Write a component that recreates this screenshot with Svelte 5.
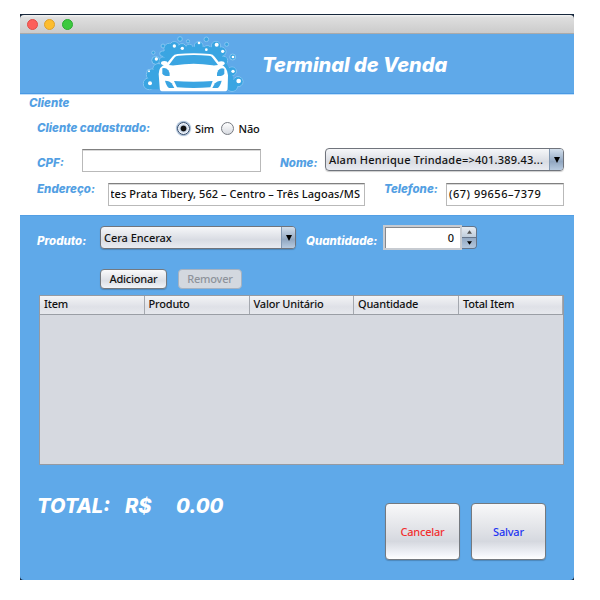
<script>
  const columns = ['Item', 'Produto', 'Valor Unitário', 'Quantidade', 'Total Item'];
  let registered = $state(true);

  const foam = [
    [58, 161, 18], [66, 134, 17], [84, 116, 15], [100, 94, 13], [108, 72, 12],
    [118, 56, 16], [133, 50, 15], [156, 55, 14], [178, 54, 11], [206, 48, 13],
    [232, 60, 13], [258, 48, 14], [274, 65, 14], [280, 92, 13], [306, 124, 13], [324, 155, 15], [306, 166, 18]
  ];
  const bubbles = [
    [99, 48, 6], [70, 68, 5], [150, 27, 7], [174, 34, 5], [229, 28, 7],
    [290, 43, 6], [77, 91, 12], [308, 81, 9], [57, 124, 6], [97, 71, 8]
  ];
  const shine = [
    [79, 87, 5], [133, 48, 5], [157, 55, 5], [207, 39, 4], [260, 44, 6],
    [278, 64, 5], [229, 59, 4], [60, 160, 6], [326, 153, 7], [309, 124, 5], [309, 81, 4], [57, 124, 3]
  ];
</script>

<main class="window">
  <header class="titlebar">
    <i class="light red"></i><i class="light yellow"></i><i class="light green"></i>
  </header>

  <section class="banner">
    <svg class="logo" viewBox="36 18 306 171" aria-hidden="true">
      <g fill="#3aa5e2" stroke="#86c6f2" stroke-width="3">
        {#each foam as [x, y, r]}<circle cx={x} cy={y} {r} />{/each}
        {#each bubbles as [x, y, r]}<circle cx={x} cy={y} {r} />{/each}
      </g>
      <g fill="#3aa5e2">
        {#each foam as [x, y, r]}<circle cx={x} cy={y} r={r - 1.5} />{/each}
        <path d="M60 178 L66 140 L96 96 L118 58 L180 50 L260 52 L284 90 L306 130 L318 178Z" />
      </g>
      <g fill="#fff">
        {#each shine as [x, y, r]}<circle cx={x} cy={y} {r} />{/each}
        <path d="M109 102 L127 80 Q132 73 143 72 Q191 68 240 72 Q249 73 254 80 L271 102 Q292 110 294 136 L293 172 Q293 184 286 184 L96 184 Q89 184 89 172 L86 132 Q86 109 109 102Z" />
        <ellipse cx="103" cy="99" rx="10" ry="6" />
        <ellipse cx="274" cy="100" rx="10" ry="6" />
      </g>
      <g fill="#3aa5e2">
        <path d="M117 105 L133 83 Q137 77 145 77 Q191 73 237 77 Q244 77 248 84 L264 105 Q254 107 247 106 Q191 97 135 106 Q126 107 117 105Z" />
        <path d="M97 115 Q108 112 115 121 Q121 130 119 138 Q102 140 97 131Z" />
        <path d="M283 116 Q272 112 265 121 Q259 130 261 138 Q278 140 283 131Z" />
        <path d="M132 153 Q191 158 248 153 L241 172 Q191 176 141 172Z" />
        <path d="M105 152 Q120 153 125 160 L133 174 L117 174 Q109 168 105 152Z" />
        <path d="M275 152 Q260 153 255 160 L247 174 L263 174 Q271 168 275 152Z" />
      </g>
    </svg>
    <h1>Terminal de Venda</h1>
  </section>

  <section class="client">
    <h2 class="label">Cliente</h2>
    <div class="row registered">
      <span class="label q">Cliente cadastrado:</span>
      <label class="opt"><input type="radio" name="reg" checked={registered} onchange={() => (registered = true)} /><span class="dot"></span><span>Sim</span></label>
      <label class="opt"><input type="radio" name="reg" checked={!registered} onchange={() => (registered = false)} /><span class="dot"></span><span>Não</span></label>
    </div>
    <div class="row ids">
      <span class="label cpf">CPF:</span>
      <div class="field cpf-field"></div>
      <span class="label nome">Nome:</span>
      <div class="combo names"><span class="value">Alam Henrique Trindade=&gt;401.389.43...</span><span class="arrow"><svg viewBox="0 0 6 6"><path d="M0 0H6L3 6Z" /></svg></span></div>
    </div>
    <div class="row contact">
      <span class="label addr">Endereço:</span>
      <div class="field addr-field"><div class="clip"><span>ntes Prata Tibery, 562 – Centro – Três Lagoas/MS</span></div></div>
      <span class="label tel">Telefone:</span>
      <div class="field tel-field"><span>(67) 99656–7379</span></div>
    </div>
  </section>

  <section class="sale">
    <div class="row product">
      <span class="label prod">Produto:</span>
      <div class="combo products"><span class="value">Cera Encerax</span><span class="arrow"><svg viewBox="0 0 6 6"><path d="M0 0H6L3 6Z" /></svg></span></div>
      <span class="label qty">Quantidade:</span>
      <div class="spinner">
        <span class="amount">0</span>
        <div class="steps">
          <span><svg viewBox="0 0 6 4"><path d="M0 4H6L3 0Z" /></svg></span>
          <span class="down"><svg viewBox="0 0 6 4"><path d="M0 0H6L3 4Z" /></svg></span>
        </div>
      </div>
    </div>
    <div class="row actions">
      <button class="add">Adicionar</button>
      <button class="remove" disabled>Remover</button>
    </div>
    <div class="table">
      <div class="thead">
        {#each columns as name}<span>{name}</span>{/each}
      </div>
    </div>
    <footer class="row">
      <div class="total"><span class="t1">TOTAL:</span><span class="t2">R$</span><span class="t3">0.00</span></div>
      <button class="big cancel">Cancelar</button>
      <button class="big save">Salvar</button>
    </footer>
  </section>
</main>

<style>
  :global(body) { background: #fff; }
  * { box-sizing: border-box; }
  .window {
    width: 554px; height: 566px; margin: 14px 0 0 20px; overflow: hidden;
    background: #17283d; font: 500 11px/14px "Noto Sans", sans-serif; color: #111;
    white-space: nowrap; letter-spacing: -0.15px;
    display: flex; flex-direction: column;
  }
  .row { display: flex; align-items: flex-start; }
  .titlebar {
    height: 19px; margin-top: 1px; flex: none; display: flex; align-items: center; gap: 6.5px; padding: 0 0 0 6.5px;
    background: linear-gradient(#f4f4f4, #dedede 15%, #cbcbcb); border-bottom: 1px solid #aaa;
    border-radius: 4px 4px 0 0;
  }
  .light { width: 11px; height: 11px; border-radius: 50%; border: 1px solid; }
  .red { background: #fc605b; border-color: #e04d48; }
  .yellow { background: #fdbd2f; border-color: #dea02c; }
  .green { background: #3dc93f; border-color: #2cab31; }

  .banner {
    height: 60px; flex: none; display: flex; background: #5fa9e9; border-bottom: 1px solid #4999e4;
  }
  .logo { width: 102px; height: 57px; margin: 2px 0 0 122px; }
  h1 {
    margin: 17px 0 0 18px; color: #fff; font: italic 800 20px/28px Inter, sans-serif; letter-spacing: 0;
  }
  .label {
    font: italic 800 11.5px/16px Inter, sans-serif; color: #539fe3; flex: none; letter-spacing: 0;
  }
  .client { height: 121px; flex: none; background: #fff; border-top: 1px solid #c3e0fa; }
  h2.label { margin: 0 0 0 9px; height: 23px; }
  .registered { height: 31px; padding-left: 17px; }
  .registered .label { margin-top: 2px; width: 140px; }
  .opt { display: flex; align-items: center; width: 43.5px; height: 19px; margin-top: 1px; }
  .opt input { appearance: none; width: 0; height: 0; margin: 0; }
  .dot {
    width: 13px; height: 13px; margin-right: 5px; border-radius: 50%; border: 1px solid #777b82;
    background: linear-gradient(#fff, #d7dae0);
  }
  input:checked + .dot {
    border-color: #2d4567; background: radial-gradient(circle, #111 0 2.5px, #c2d0e2 3.3px, #f1f5fa 5px);
    box-shadow: 0 0 1px 1px #98b2cf;
  }
  .ids { height: 35px; padding-left: 17px; }
  .ids .label { margin-top: 6px; }
  .cpf { width: 45px; }
  .field {
    height: 23px; background: #fff; border: 1px solid #b9b9b9; border-top-color: #808080; flex: none;
    box-shadow: inset 0 1px #d8d8d8;
    display: flex; align-items: center; padding: 0 3px 1px;
  }
  .cpf-field { width: 179px; }
  .nome { width: 45px; margin-left: 19px; }
  .combo {
    height: 23px; flex: none; display: flex; border: 1px solid #70747c; border-radius: 4px; overflow: hidden;
    background: linear-gradient(#f6f7f9, #d9dce3 60%, #e9ebf1 100%); box-shadow: 0 1px 1px #0003;
  }
  .value { flex: 1; padding: 4px 0 0 3px; }
  .arrow {
    width: 14px; display: flex; align-items: center; justify-content: center;
    background: linear-gradient(#d3dfec, #91a7c1 60%, #b8cbe0); border-left: 1px solid #8298b2;
  }
  .arrow svg { width: 6px; height: 6px; }
  .names { width: 239px; margin-top: -1px; letter-spacing: 0.22px; }
  .contact { padding-left: 17px; }
  .contact .label { margin-top: -3px; }
  .addr { width: 71px; }
  .addr-field { width: 257px; margin-top: -1px; padding: 0 4px 1px 2px; letter-spacing: 0.06px; }
  .clip { flex: 1; min-width: 0; overflow: hidden; display: flex; justify-content: flex-end; }
  .tel { width: 62px; margin-left: 19px; }
  .tel-field { width: 118px; margin-top: -1px; letter-spacing: 0.52px; padding-left: 2px; }

  .sale { height: 365px; flex: none; background: #5fa9e9; border-radius: 0 0 4px 4px; padding-top: 10px; border-top: 1px solid #539fe4; }
  .sale .label { color: #fff; margin-top: 7px; }
  .product { height: 43px; padding-left: 17px; }
  .prod { width: 63px; }
  .products { width: 196px; letter-spacing: -0.05px; }
  .qty { width: 77px; margin-left: 10px; }
  .spinner { display: flex; margin-top: -1px; height: 25px; }
  .amount {
    width: 79px; background: #fff; border: 2px solid #c7cbd1; box-shadow: inset 1px 1px 0 #85888d;
    text-align: right; padding: 4px 6px 0 0;
  }
  .steps {
    width: 15px; height: 23px; margin-top: 1px; display: flex; flex-direction: column;
    border: 1px solid #65758a; border-left: 0; border-radius: 0 4px 4px 0; overflow: hidden;
  }
  .steps span { flex: 1; display: flex; align-items: center; justify-content: center; background: linear-gradient(#e9edf2, #bfcddc); }
  .steps .down { background: linear-gradient(#93a9c3, #b3c7dd); border-top: 1px solid #65758a; }
  .steps svg { width: 5px; height: 4px; }
  .steps span:first-child svg { fill: #555; }
  .actions { height: 26px; padding-left: 80px; gap: 11px; }
  button {
    font: inherit; letter-spacing: -0.2px; color: #111; padding: 0; border: 1px solid #74797f; border-radius: 4px;
    background: linear-gradient(#fafafb, #dcdfe5 60%, #f2f4f8); box-shadow: 0 1px 1px #0003; flex: none;
  }
  .add { width: 67px; height: 20px; }
  .remove { width: 64px; height: 20px; color: #8e939b; background: #d3d8df; border-color: #a5b2c1; box-shadow: none; }
  .cancel { letter-spacing: -0.25px; }
  .table {
    width: 525px; height: 170px; margin-left: 19px; background: #d6d9e0; border: 1px solid #959aa2;
  }
  .thead {
    display: grid; grid-template-columns: 104.5px 105px 104.5px 105px 1fr; height: 19px;
    background: linear-gradient(#f3f4f6, #dfe1e7 60%, #e6e8ed); border-bottom: 1px solid #9a9ea5;
  }
  .thead span { padding: 1px 0 0 4px; border-right: 1px solid #a4a8af; letter-spacing: -0.2px; }
  footer { padding-left: 17px; }
  .total { display: flex; width: 348px; margin-top: 27px; font: italic 800 20px/28px Inter, sans-serif; letter-spacing: 0; color: #fff; }
  .t1 { width: 88px; }
  .t2 { width: 51px; }
  .big {
    width: 75px; height: 57px; margin-top: 38px;
    background: linear-gradient(#f8f8f9, #dfe1e6 50%, #d5d8df 68%, #f3f5fa 92%, #fff);
  }
  .cancel { color: #f22f2f; margin-right: 11px; }
  .save { color: #1f35f2; }
</style>
